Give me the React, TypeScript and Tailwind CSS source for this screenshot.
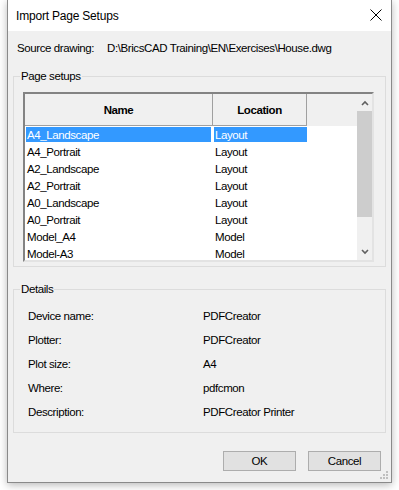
import React from "react";

const rows: [string, string][] = [
  ["A4_Landscape", "Layout"],
  ["A4_Portrait", "Layout"],
  ["A2_Landscape", "Layout"],
  ["A2_Portrait", "Layout"],
  ["A0_Landscape", "Layout"],
  ["A0_Portrait", "Layout"],
  ["Model_A4", "Model"],
  ["Model-A3", "Model"],
];

const details: [string, string][] = [
  ["Device name:", "PDFCreator"],
  ["Plotter:", "PDFCreator"],
  ["Plot size:", "A4"],
  ["Where:", "pdfcmon"],
  ["Description:", "PDFCreator Printer"],
];

export default function App() {
  return (
    <div
      className="w-[399px] h-[490px] bg-white pl-[7px] overflow-hidden text-black"
      style={{ fontFamily: '"Liberation Sans", Arial, sans-serif' }}
    >
      <div className="relative w-[385px] h-[483px] bg-[#f0f0f0] border-x border-b border-[#8a8a8a] shadow-[0_2px_8px_rgba(0,0,0,0.28)] flex flex-col">
        {/* Title bar */}
        <div className="h-[31px] bg-white flex items-center justify-between pl-[8px] pr-[9px] shrink-0">
          <span className="text-[12px] tracking-[-0.2px] leading-[16px]">Import Page Setups</span>
          <svg width="12" height="12" viewBox="0 0 12 12" className="mt-[-1px]">
            <path d="M0.5 0.5 L11.5 11.5 M11.5 0.5 L0.5 11.5" stroke="#000" strokeWidth="1" fill="none" />
          </svg>
        </div>

        <div className="flex flex-col text-[11.5px] tracking-[-0.4px] leading-[16px]">
          {/* Source row */}
          <div className="flex pt-[9px] pl-[9px]">
            <span className="w-[90px]">Source drawing:</span>
            <span>D:\BricsCAD Training\EN\Exercises\House.dwg</span>
          </div>

          {/* Page setups */}
          <fieldset className="ml-[5px] mt-[12px] w-[373px] border border-[#dcdcdc] pb-[4px]">
            <legend className="ml-[6px] px-[1px] leading-[16px]">Page setups</legend>
            <div className="ml-[9px] mt-[8px] w-[351px] h-[170px] border-2 border-t-[#838383] border-l-[#838383] border-r-[#e3e3e3] border-b-[#e3e3e3] bg-white flex overflow-hidden">
              <div className="flex-1 flex flex-col">
                <div className="h-[32px] flex bg-[#f0f0f0] shrink-0">
                  <div className="w-[188px] border-r border-b border-[#a0a0a0] flex items-center justify-center font-bold">
                    Name
                  </div>
                  <div className="w-[94px] border-r border-b border-[#a0a0a0] flex items-center justify-center font-bold">
                    Location
                  </div>
                  <div className="flex-1" />
                </div>
                {rows.map(([n, l], i) => (
                  <div key={n} className="h-[17px] flex items-center shrink-0">
                    <div className="w-[188px] pl-[1px] pr-[2px]">
                      <div className={`h-[15px] flex items-center pl-[1px] ${i === 0 ? "bg-[#3399ff] text-white" : ""}`}>{n}</div>
                    </div>
                    <div className="w-[94px] pl-[1px]">
                      <div className={`h-[15px] flex items-center pl-[1px] ${i === 0 ? "bg-[#3399ff] text-white" : ""}`}>{l}</div>
                    </div>
                  </div>
                ))}
              </div>
              {/* Scrollbar */}
              <div className="w-[15px] bg-[#f0f0f0] flex flex-col shrink-0">
                <div className="h-[17px] flex items-center justify-center">
                  <svg width="8" height="6" viewBox="0 0 8 6">
                    <path d="M1 5 L4 2 L7 5" stroke="#606060" strokeWidth="1.6" fill="none" />
                  </svg>
                </div>
                <div className="h-[106px] bg-[#cdcdcd]" />
                <div className="flex-1" />
                <div className="h-[17px] flex items-center justify-center">
                  <svg width="8" height="6" viewBox="0 0 8 6">
                    <path d="M1 1 L4 4 L7 1" stroke="#606060" strokeWidth="1.6" fill="none" />
                  </svg>
                </div>
              </div>
            </div>
          </fieldset>

          {/* Details */}
          <fieldset className="ml-[5px] mt-[14px] w-[373px] border border-[#dcdcdc] pb-[8px]">
            <legend className="ml-[6px] px-[1px] leading-[16px]">Details</legend>
            <div className="ml-[14px] mt-[7px] flex flex-col">
              {details.map(([k, v]) => (
                <div key={k} className="h-[24px] flex items-center">
                  <span className="w-[175px]">{k}</span>
                  <span>{v}</span>
                </div>
              ))}
            </div>
          </fieldset>

          {/* Buttons */}
          <div className="flex justify-end gap-[12px] mt-[18px] pr-[10px]">
            <button className="w-[73px] h-[20px] bg-[#e1e1e1] border border-[#adadad] flex items-center justify-center">
              OK
            </button>
            <button className="w-[73px] h-[20px] bg-[#e1e1e1] border border-[#adadad] flex items-center justify-center">
              Cancel
            </button>
          </div>
        </div>

        {/* Resize grip */}
        <svg className="absolute right-[2px] bottom-[2px]" width="10" height="10" viewBox="0 0 10 10">
          {[
            [7, 1],
            [7, 4],
            [4, 4],
            [7, 7],
            [4, 7],
            [1, 7],
          ].map(([x, y], i) => (
            <rect key={i} x={x} y={y} width="2" height="2" fill="#c0c0c0" />
          ))}
        </svg>
      </div>
    </div>
  );
}
